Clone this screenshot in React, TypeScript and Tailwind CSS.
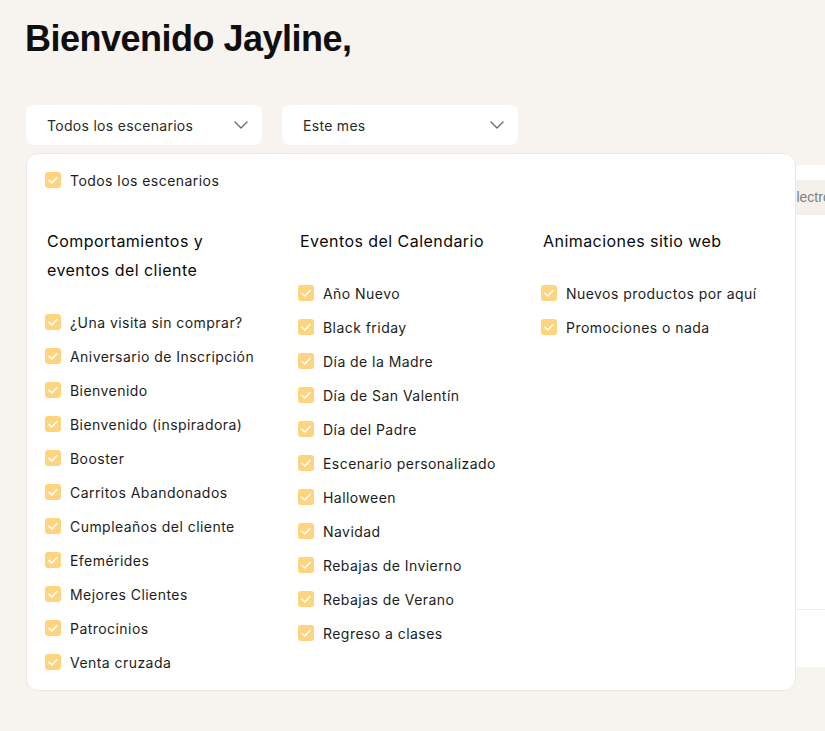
import React from "react";

const col1 = [
  "¿Una visita sin comprar?",
  "Aniversario de Inscripción",
  "Bienvenido",
  "Bienvenido (inspiradora)",
  "Booster",
  "Carritos Abandonados",
  "Cumpleaños del cliente",
  "Efemérides",
  "Mejores Clientes",
  "Patrocinios",
  "Venta cruzada",
];
const col2 = [
  "Año Nuevo",
  "Black friday",
  "Día de la Madre",
  "Día de San Valentín",
  "Día del Padre",
  "Escenario personalizado",
  "Halloween",
  "Navidad",
  "Rebajas de Invierno",
  "Rebajas de Verano",
  "Regreso a clases",
];
const col3 = ["Nuevos productos por aquí", "Promociones o nada"];

function Check() {
  return (
    <span className="w-[16px] h-[16px] rounded-[3px] bg-[#ffd47f] flex items-center justify-center shrink-0">
      <svg width="16" height="16" viewBox="0 0 16 16" fill="none">
        <path d="M4 8.3 L6.8 11 L12 5.5" stroke="#fff" strokeWidth="1.6" strokeLinecap="round" strokeLinejoin="round" />
      </svg>
    </span>
  );
}

function Item({ label }: { label: string }) {
  return (
    <div className="h-[24px] flex items-center gap-[9px]">
      <Check />
      <span className="text-[14px] tracking-[0.45px] text-[#1d1d1d] whitespace-nowrap">{label}</span>
    </div>
  );
}

function Chevron() {
  return (
    <svg width="14" height="8" viewBox="0 0 14 8" fill="none">
      <path d="M1 1 L7 7 L13 1" stroke="#6b6b6b" strokeWidth="1.4" strokeLinecap="round" strokeLinejoin="round" />
    </svg>
  );
}

function Column({ title, items, width }: { title: React.ReactNode; items: string[]; width: string }) {
  return (
    <div className={`${width} shrink-0`}>
      <div className="pl-[2px] text-[16px] leading-[29px] tracking-[0.45px] text-[#0a0a0a] font-normal">{title}</div>
      <div className="mt-[25px] flex flex-col gap-[10px]">
        {items.map((i) => (
          <Item key={i} label={i} />
        ))}
      </div>
    </div>
  );
}

export default function App() {
  return (
    <div
      className="w-full h-[731px] overflow-hidden bg-[#f7f4f0]"
      style={{ fontFamily: "Inter, 'Noto Sans', sans-serif" }}
    >
      <div className="pl-[26px] pt-[21px]">
        <h1
          className="text-[36px] leading-[36px] font-bold tracking-[-0.5px] text-[#0f0f0f] -ml-[1px]"
          style={{ fontFamily: "'Liberation Sans', Arial, sans-serif" }}
        >
          Bienvenido Jayline,
        </h1>

        <div className="relative mt-[48px] flex gap-[20px]">
          <div className="w-[236px] h-[40px] rounded-[8px] bg-white pl-[21px] pr-[14px] flex items-center justify-between text-[14px] tracking-[0.3px] text-[#2a2a2a]">
            <span>Todos los escenarios</span>
            <Chevron />
          </div>
          <div className="w-[236px] h-[40px] rounded-[8px] bg-white pl-[21px] pr-[14px] flex items-center justify-between text-[14px] tracking-[0.3px] text-[#2a2a2a]">
            <span>Este mes</span>
            <Chevron />
          </div>

          <div className="absolute left-0 top-[48px] z-10 w-[770px] bg-white border border-[#ebe8e4] rounded-[12px] px-[18px] pt-[14px] pb-[16px]">
            <Item label="Todos los escenarios" />
            <div className="mt-[35px] flex">
              <Column
                width="w-[253px]"
                title={
                  <>
                    Comportamientos y
                    <br />
                    eventos del cliente
                  </>
                }
                items={col1}
              />
              <Column width="w-[243px]" title="Eventos del Calendario" items={col2} />
              <Column width="flex-1" title="Animaciones sitio web" items={col3} />
            </div>
          </div>
        </div>

        <div className="mt-[20px] w-[900px] h-[502px] bg-white rounded-[12px] pt-[15px] flex flex-col">
          <div
            className="mx-[15px] h-[35px] bg-[#f4f1ed] flex items-center text-[14px] text-[#7f7f7f]"
            style={{ fontFamily: "'Liberation Sans', Arial, sans-serif" }}
          >
            <span className="w-[300px] shrink-0">Escenario</span>
            <span className="w-[401px] shrink-0">Estado</span>
            <span className="whitespace-nowrap">Correo electrónico</span>
          </div>
          <div className="flex-1" />
          <div className="border-t border-[#efece8] h-[58px]" />
        </div>
      </div>
    </div>
  );
}
